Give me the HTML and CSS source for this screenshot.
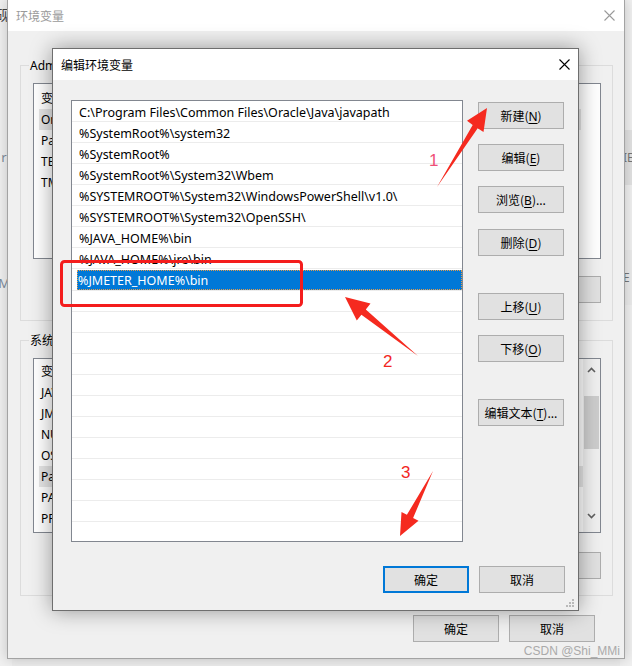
FILE: index.html
```html
<!DOCTYPE html>
<html lang="zh-CN">
<head>
    <meta charset="UTF-8">
    <meta name="viewport" content="width=device-width, initial-scale=1.0">
    <title>编辑环境变量</title>
    <link rel="stylesheet" href="styles.css">
</head>
<body>
    <div class="desktop">
        <!-- windows further behind, only slivers visible -->
        <div class="far far-left">
            <div class="far-line l1">砚</div>
            <div class="far-line l2">r:</div>
            <div class="far-line l3">M</div>
        </div>
        <div class="far far-right">
            <div class="band b1">IE</div>
            <div class="band b2">E</div>
        </div>

        <!-- 环境变量 (inactive, behind) -->
        <section class="window back">
            <header class="titlebar">
                <span class="title">环境变量</span>
                <svg class="close" width="11" height="11" viewBox="0 0 11 11"><path d="M0.5 0.5L10.5 10.5M10.5 0.5L0.5 10.5"/></svg>
            </header>
            <div class="back-body">
                <div class="group">
                    <div class="group-label">Administrator 的用户变量(U)</div>
                    <div class="listbox user-list">
                        <div class="lrow head">变量</div>
                        <div class="lrow sel">OneDrive</div>
                        <div class="lrow">Path</div>
                        <div class="lrow">TEMP</div>
                        <div class="lrow">TMP</div>
                    </div>
                    <div class="btn-row">
                        <button class="btn">新建(<u>N</u>)...</button>
                        <button class="btn">编辑(<u>E</u>)...</button>
                        <button class="btn">删除(<u>D</u>)</button>
                    </div>
                </div>
                <div class="group second">
                    <div class="group-label">系统变量(S)</div>
                    <div class="listbox sys-list">
                        <div class="rows">
                            <div class="lrow head">变量</div>
                            <div class="lrow">JAVA_HOME</div>
                            <div class="lrow">JMETER_HOME</div>
                            <div class="lrow">NUMBER_OF_PROCESSORS</div>
                            <div class="lrow">OS</div>
                            <div class="lrow sel">Path</div>
                            <div class="lrow">PATHEXT</div>
                            <div class="lrow">PROCESSOR_ARCHITECTURE</div>
                        </div>
                        <div class="scrollbar">
                            <svg width="9" height="6" viewBox="0 0 9 6"><path d="M1 5L4.5 1.5L8 5"/></svg>
                            <div class="thumb"></div>
                            <svg class="down" width="9" height="6" viewBox="0 0 9 6"><path d="M1 1L4.5 4.5L8 1"/></svg>
                        </div>
                    </div>
                    <div class="btn-row">
                        <button class="btn">新建(<u>W</u>)...</button>
                        <button class="btn">编辑(<u>I</u>)...</button>
                        <button class="btn">删除(<u>L</u>)</button>
                    </div>
                </div>
                <div class="btn-row footer">
                    <button class="btn">确定</button>
                    <button class="btn">取消</button>
                </div>
            </div>
        </section>

        <!-- 编辑环境变量 (active dialog) -->
        <section class="window front">
            <header class="titlebar">
                <span class="title">编辑环境变量</span>
                <svg class="close" width="11" height="11" viewBox="0 0 11 11"><path d="M0.5 0.5L10.5 10.5M10.5 0.5L0.5 10.5"/></svg>
            </header>
            <div class="front-body">
                <div class="main">
                    <div class="listbox path-list">
                        <div class="prow">C:\Program Files\Common Files\Oracle\Java\javapath</div>
                        <div class="prow">%SystemRoot%\system32</div>
                        <div class="prow">%SystemRoot%</div>
                        <div class="prow">%SystemRoot%\System32\Wbem</div>
                        <div class="prow">%SYSTEMROOT%\System32\WindowsPowerShell\v1.0\</div>
                        <div class="prow">%SYSTEMROOT%\System32\OpenSSH\</div>
                        <div class="prow">%JAVA_HOME%\bin</div>
                        <div class="prow">%JAVA_HOME%\jre\bin</div>
                        <div class="prow active"><span>%JMETER_HOME%\bin</span></div>
                        <div class="prow"></div>
                        <div class="prow"></div>
                        <div class="prow"></div>
                        <div class="prow"></div>
                        <div class="prow"></div>
                        <div class="prow"></div>
                        <div class="prow"></div>
                        <div class="prow"></div>
                        <div class="prow"></div>
                        <div class="prow"></div>
                        <div class="prow"></div>
                        <div class="prow"></div>
                    </div>
                    <div class="side">
                        <button class="btn">新建(<u>N</u>)</button>
                        <button class="btn">编辑(<u>E</u>)</button>
                        <button class="btn">浏览(<u>B</u>)...</button>
                        <button class="btn">删除(<u>D</u>)</button>
                        <button class="btn far-gap">上移(<u>U</u>)</button>
                        <button class="btn">下移(<u>O</u>)</button>
                        <button class="btn far-gap">编辑文本(<u>T</u>)...</button>
                    </div>
                </div>
                <div class="footer front-footer">
                    <button class="btn default">确定</button>
                    <button class="btn">取消</button>
                </div>
            </div>
            <svg class="grip" width="9" height="9" viewBox="0 0 9 9">
                <rect x="7" y="1" width="2" height="2"/><rect x="4" y="4" width="2" height="2"/><rect x="7" y="4" width="2" height="2"/>
                <rect x="1" y="7" width="2" height="2"/><rect x="4" y="7" width="2" height="2"/><rect x="7" y="7" width="2" height="2"/>
            </svg>
        </section>

        <!-- red annotations drawn over the screenshot -->
        <svg class="marks" width="632" height="666" viewBox="0 0 632 666">
            <rect x="61.5" y="261.5" width="240" height="44" rx="3" fill="none" stroke="#f41d1d" stroke-width="3"/>
            <polygon points="437,187 477.7,128.2 483.5,132 487,108 467,120.8 472.7,125" fill="#f52a1f"/>
            <polygon points="418,356 365.8,309.4 370.5,303.5 345,297 356.8,320.5 361.4,314.8" fill="#f52a1f"/>
            <polygon points="433,471 413.1,518 418.5,520.8 400,536 401.5,512 406.9,514.8" fill="#f52a1f"/>
            <text x="429" y="166" class="num pink">1</text>
            <text x="383" y="367" class="num">2</text>
            <text x="401" y="478" class="num">3</text>
        </svg>

        <div class="watermark">CSDN @Shi_MMi</div>
    </div>
</body>
</html>
```

FILE: styles.css
```css
body {
    margin: 0;
    font-family: "Noto Sans", "Noto Sans CJK SC", sans-serif;
    font-size: 12px;
    color: #000;
    background-color: #e8e8e8;
}

.desktop {
    position: relative;
    width: 632px;
    height: 666px;
    overflow: hidden;
    background-color: #ececec;
}

/* slivers of other windows */
.far {
    position: absolute;
    top: 0;
    height: 666px;
    background-color: #f0f0f0;
}

.far-left {
    left: -60px;
    width: 72px;
    text-align: right;
    color: #7d8b99;
    font-size: 13px;
}

.far-line {
    height: 18px;
    line-height: 18px;
    padding-right: 2px;
}

.far-line.l1 { margin-top: 6px; color: #444; font-size: 14px; }
.far-line.l2 { margin-top: 124px; }
.far-line.l3 { margin-top: 108px; }

.far-right {
    left: 620px;
    width: 40px;
    color: #777;
}

.band {
    height: 55px;
    line-height: 55px;
    padding-left: 3px;
    background-color: #e2e2e2;
}

.band.b1 { margin-top: 130px; }
.band.b2 { margin-top: 65px; background-color: #ebebeb; }

/* windows */
.window {
    position: absolute;
    box-sizing: border-box;
    background-color: #f0f0f0;
    display: flex;
    flex-direction: column;
}

.titlebar {
    flex: none;
    display: flex;
    align-items: center;
    justify-content: space-between;
    background-color: #fff;
    padding: 0 11px 0 8px;
    font-family: "Noto Sans CJK SC", sans-serif;
    font-size: 12px;
}

.close path {
    stroke: #000;
    stroke-width: 1.1;
    fill: none;
}

.back {
    left: 7px;
    top: 0;
    width: 618px;
    height: 659px;
    border: 1px solid #a3a3a3;
    border-top: none;
    box-shadow: 0 0 12px rgba(0, 0, 0, 0.2);
}

.back .titlebar {
    height: 31px;
    color: #9a9a9a;
    padding-right: 9px;
}

.back .close path {
    stroke: #9a9a9a;
}

.back-body {
    padding: 0 11px 0 12px;
}

.group {
    margin-top: 34px;
    border: 1px solid #dcdcdc;
    padding: 0 11px 17px 12px;
}

.group.second {
    margin-top: 19px;
    padding-bottom: 16px;
}

.group-label {
    width: max-content;
    margin: -9px 0 0 -4px;
    padding: 0 1px;
    height: 17px;
    line-height: 17px;
    background-color: #f0f0f0;
    font-family: "Noto Sans", "Noto Sans CJK SC", sans-serif;
}

.listbox {
    box-sizing: border-box;
    background-color: #fff;
    border: 1px solid #828790;
}

.user-list {
    margin-top: 9px;
    height: 176px;
    padding-top: 4px;
}

.user-list .lrow.sel {
    margin-right: 19px;
}

.sys-list {
    margin-top: 9px;
    height: 175px;
    display: flex;
}

.sys-list .rows {
    flex: 1;
    padding-top: 2px;
}

.lrow {
    height: 21px;
    line-height: 21px;
    margin-left: 5px;
    padding-left: 2px;
}

.lrow.sel {
    background-color: #e5e5e5;
}

.scrollbar {
    width: 17px;
    display: flex;
    flex-direction: column;
    align-items: center;
    background-color: #f0f0f0;
    padding-top: 8px;
}

.scrollbar path {
    stroke: #606060;
    stroke-width: 1.6;
    fill: none;
}

.scrollbar .thumb {
    width: 15px;
    height: 53px;
    margin-top: 23px;
    background-color: #cdcdcd;
}

.scrollbar .down {
    margin-top: 64px;
}

.btn-row {
    display: flex;
    justify-content: flex-end;
    gap: 10px;
}

.group .btn-row {
    margin-top: 17px;
}

.group.second .btn-row {
    margin-top: 19px;
}

.btn-row.footer {
    margin-top: 19px;
    padding-right: 18px;
}

.btn {
    box-sizing: border-box;
    width: 86px;
    height: 27px;
    padding: 0;
    background-color: #e1e1e1;
    border: 1px solid #adadad;
    border-radius: 0;
    font-family: "Noto Sans CJK SC", sans-serif;
    font-size: 12px;
    color: #000;
}

.btn u {
    font-family: "Noto Sans", sans-serif;
    text-underline-offset: 2px;
}

.btn.default {
    border: 2px solid #0078d7;
}

/* front dialog */
.front {
    left: 52px;
    top: 48px;
    width: 527px;
    height: 563px;
    border: 1px solid #6e6e6e;
    box-shadow: 0 0 20px rgba(0, 0, 0, 0.38);
}

.front .titlebar {
    height: 31px;
    padding-right: 8px;
}

.front-body {
    padding: 20px 13px 0 18px;
}

.main {
    display: flex;
}

.path-list {
    width: 392px;
    height: 442px;
    overflow: hidden;
    font-size: 12.5px;
}

.prow {
    height: 20px;
    line-height: 24px;
    border-bottom: 1px solid #ececec;
    padding-left: 7px;
    white-space: nowrap;
}

.prow.active {
    padding-left: 5px;
}

.prow.active span {
    display: block;
    height: 20px;
    margin-top: 1px;
    line-height: 22px;
    padding-left: 1px;
    background-color: #0078d7;
    color: #fff;
    outline: 1px dotted #e49b4a;
    outline-offset: -1px;
}

.side {
    margin-left: 15px;
    display: flex;
    flex-direction: column;
    gap: 15px;
    padding-top: 2px;
}

.side .btn:nth-child(4) {
    margin-top: 1px;
}

.side .btn.far-gap {
    margin-top: 22px;
}

.front-footer {
    display: flex;
    justify-content: flex-end;
    gap: 10px;
    margin-top: 24px;
}

.grip {
    position: absolute;
    right: 4px;
    bottom: 3px;
}

.grip rect {
    fill: #b9b9b9;
}

/* annotations */
.marks {
    position: absolute;
    left: 0;
    top: 0;
    pointer-events: none;
}

.num {
    font-family: "Liberation Sans", sans-serif;
    font-size: 17px;
    fill: #f2261f;
}

.num.pink {
    fill: #ef4f77;
}

.watermark {
    position: absolute;
    right: 12px;
    bottom: 8px;
    color: #aaaaaa;
    font-family: "Liberation Sans", sans-serif;
    font-size: 12px;
}
```
